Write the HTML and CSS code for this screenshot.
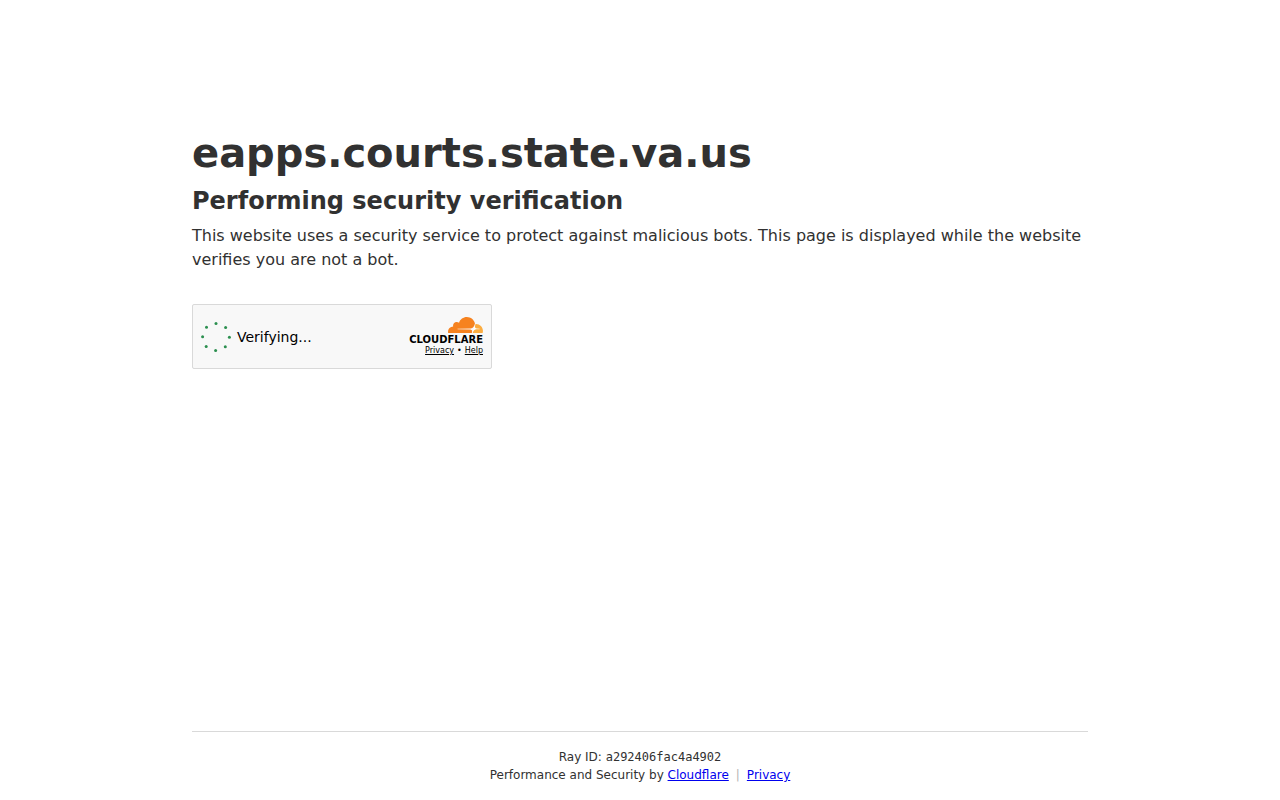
FILE: index.html
```html
<!DOCTYPE html>
<html lang="en">
  <head>
    <title>Performing security verification</title>
    <meta charset="utf-8">
    <meta name="viewport" content="width=device-width, initial-scale=1">
    <link rel="stylesheet" href="styles.css">
  </head>
  <body>
    <main class="main-content">
      <h1>eapps.courts.state.va.us</h1>
      <h2>Performing security verification</h2>
      <p>This website uses a security service to protect against malicious bots. This page is displayed while the website verifies you are not a bot.</p>

      <div class="widget">
        <div class="widget-status" role="status">
          <svg class="spinner" viewBox="0 0 30 30" aria-hidden="true">
            <circle cx="15" cy="1.6" r="1.5"/>
            <circle cx="24.6" cy="5.6" r="1.5"/>
            <circle cx="28.4" cy="15.3" r="1.5"/>
            <circle cx="24.3" cy="24.8" r="1.5"/>
            <circle cx="14.6" cy="28.4" r="1.5"/>
            <circle cx="5.2" cy="24.4" r="1.5"/>
            <circle cx="1.6" cy="14.8" r="1.5"/>
            <circle cx="5.5" cy="5.3" r="1.5"/>
          </svg>
          <span>Verifying...</span>
        </div>
        <div class="branding">
          <svg class="cloud" viewBox="0 6.5 24 11" aria-hidden="true">
            <path fill="#fff" d="M16.2 17.4l3-6.2 4 3.4.5 2.8zM6 14.6h10.5v.9H6z"/>
            <path fill="#f6821f" d="M16.5088 16.8447c.1475-.5068.0908-.9707-.1553-1.3154-.2246-.3164-.6045-.499-1.0615-.5205l-8.6592-.1123a.1559.1559 0 0 1-.1333-.0713c-.0283-.042-.0351-.0986-.021-.1553.0278-.084.1123-.1484.2036-.1562l8.7359-.1123c1.0351-.0489 2.1601-.8868 2.5537-1.9136l.499-1.3013c.0215-.0561.0293-.1128.0147-.168-.5625-2.5463-2.835-4.4453-5.5499-4.4453-2.5039 0-4.6284 1.6177-5.3876 3.8614-.4927-.3658-1.1187-.5625-1.794-.499-1.2026.119-2.1665 1.083-2.2861 2.2856-.0283.31-.0069.6128.0635.894C1.5683 13.171 0 14.7754 0 16.752c0 .1748.0142.3515.0352.5273.0141.083.0844.1475.1689.1475h15.9814c.0909 0 .1758-.0645.2032-.1553l.12-.4268z"/>
            <path fill="#fbad41" d="M19.2656 11.2813c-.0771 0-.1611 0-.2383.0112-.0566 0-.1054.0415-.127.0976l-.3378 1.1744c-.1475.5068-.0918.9707.1543 1.3164.2256.3164.6055.498 1.0625.5195l1.8437.1133c.0557 0 .1055.0263.1329.0703.0283.043.0351.1074.0214.1562-.0283.084-.1132.1485-.204.1553l-1.921.1123c-1.041.0488-2.1582.8867-2.5527 1.914l-.1406.3585c-.0283.0713.0215.1416.0986.1416h6.5977c.0771 0 .1474-.0489.169-.126.1122-.4082.1757-.837.1757-1.2803 0-2.6025-2.125-4.727-4.7344-4.727"/>
          </svg>
          <span class="wordmark">CLOUDFLARE</span>
          <div class="terms">
            <a href="#privacy">Privacy</a><span>•</span><a href="#help">Help</a>
          </div>
        </div>
      </div>
    </main>

    <footer class="footer">
      <div class="footer-inner">
        <div>Ray ID: <code>a292406fac4a4902</code></div>
        <div>Performance and Security by <a href="#cloudflare">Cloudflare</a><span class="divider">|</span><a href="#privacy">Privacy</a></div>
      </div>
    </footer>
  </body>
</html>
```

FILE: styles.css
```css
* {
  box-sizing: border-box;
  margin: 0;
  padding: 0;
}

body {
  background-color: #fff;
  color: #313131;
  display: flex;
  flex-direction: column;
  font-family: "DejaVu Sans", sans-serif;
  font-size: 16px;
  line-height: 24px;
  min-height: 100vh;
}

.main-content {
  flex: 1;
  margin: 0 auto;
  max-width: 960px;
  padding: 128px 32px 32px;
  width: 100%;
}

h1 {
  font-size: 40px;
  line-height: 50px;
  margin-bottom: 8px;
}

h2 {
  font-size: 24px;
  line-height: 30px;
  margin-bottom: 8px;
}

.widget {
  align-items: center;
  background-color: #f8f8f8;
  border: 1px solid #d9d9d9;
  border-radius: 2px;
  color: #000;
  display: flex;
  justify-content: space-between;
  margin-top: 32px;
  max-width: 300px;
  min-height: 65px;
  padding: 0 8px;
}

.widget-status {
  align-items: center;
  display: flex;
  font-size: 14px;
  gap: 6px;
}

.spinner {
  fill: #2b8f4f;
  height: 30px;
  width: 30px;
}

.branding {
  align-items: flex-end;
  display: flex;
  flex-direction: column;
}

.cloud {
  height: 16px;
  width: 35px;
}

.wordmark {
  font-size: 10px;
  font-weight: 700;
  line-height: 13px;
}

.terms {
  display: flex;
  font-size: 8px;
  gap: 3px;
  line-height: 10px;
}

.terms a {
  color: inherit;
}

.footer {
  font-size: 12px;
  line-height: 18px;
  margin: 0 auto;
  max-width: 960px;
  padding: 0 32px;
  text-align: center;
  width: 100%;
}

.footer-inner {
  border-top: 1px solid #d9d9d9;
  padding: 16px 0;
}

.footer a {
  color: #0000ee;
}

code {
  font-family: "DejaVu Sans Mono", monospace;
  font-size: 12px;
}

.divider {
  color: #b5b5b5;
  margin: 0 7px;
}
```
